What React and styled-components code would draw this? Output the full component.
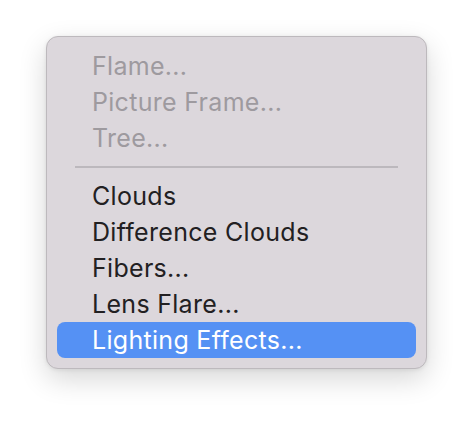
import React from "react";
import styled, { createGlobalStyle } from "styled-components";

const GlobalStyle = createGlobalStyle`
  html, body {
    margin: 0;
    padding: 0;
    background: #ffffff;
  }
  body {
    font-family: Inter, "Noto Sans", "Liberation Sans", sans-serif;
  }
`;

const Page = styled.div`
  width: 472px;
  height: 422px;
  padding: 36px 0 0 46px;
  box-sizing: border-box;
`;

const Menu = styled.div`
  width: 381px;
  box-sizing: border-box;
  padding: 11px 10px 10px 10px;
  background: #dcd7dc;
  border: 1px solid #bdb9bd;
  border-radius: 12px;
  box-shadow: 0 10px 28px rgba(0, 0, 0, 0.16), 0 1px 4px rgba(0, 0, 0, 0.08);
  display: flex;
  flex-direction: column;
`;

const Item = styled.div`
  height: 36px;
  display: flex;
  align-items: center;
  padding-left: 35px;
  border-radius: 8px;
  font-size: 25px;
  letter-spacing: 0.3px;
  color: ${(p) => (p.$disabled ? "#9e9a9f" : p.$active ? "#ffffff" : "#222022")};
  background: ${(p) => (p.$active ? "#5591f4" : "transparent")};
`;

const Separator = styled.div`
  height: 22px;
  display: flex;
  align-items: center;
  padding: 0 18px;

  &::after {
    content: "";
    flex: 1;
    height: 2px;
    background: #bcb8bd;
  }
`;

const disabled = ["Flame...", "Picture Frame...", "Tree..."];
const items = ["Clouds", "Difference Clouds", "Fibers...", "Lens Flare...", "Lighting Effects..."];

export default function App() {
  return (
    <>
      <GlobalStyle />
      <Page>
        <Menu>
          {disabled.map((t) => (
            <Item key={t} $disabled>
              {t}
            </Item>
          ))}
          <Separator />
          {items.map((t) => (
            <Item key={t} $active={t === "Lighting Effects..."}>
              {t}
            </Item>
          ))}
        </Menu>
      </Page>
    </>
  );
}
